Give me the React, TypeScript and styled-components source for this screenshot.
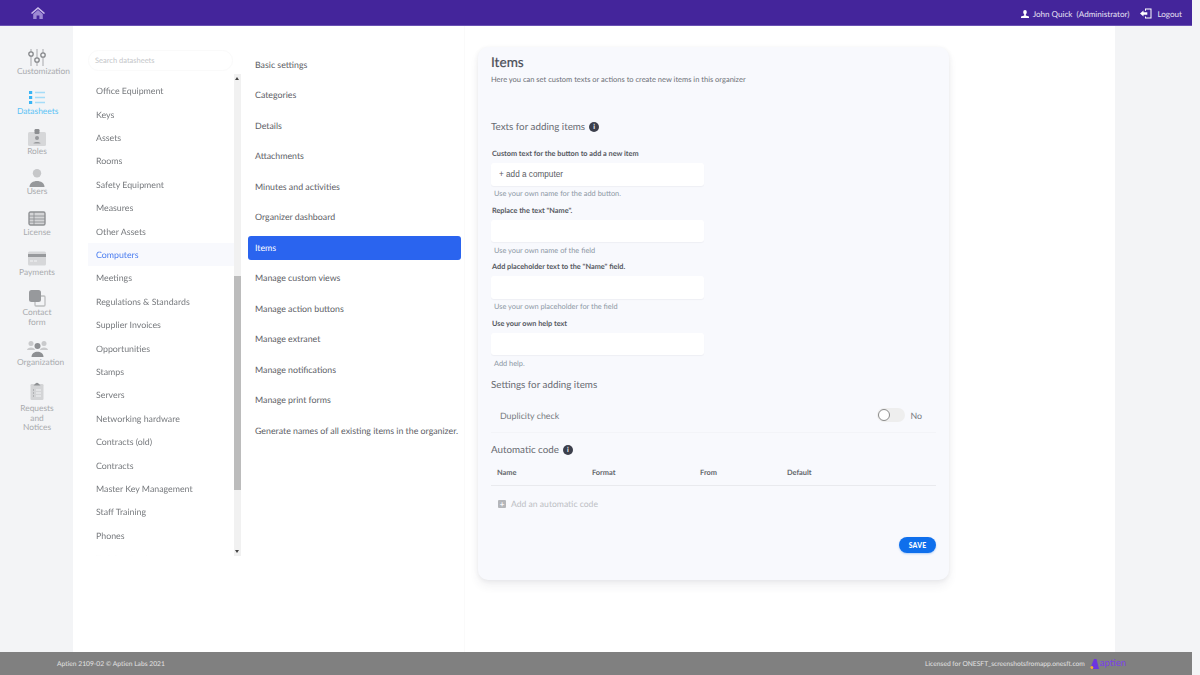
import styled, { createGlobalStyle } from "styled-components";

const GlobalStyle = createGlobalStyle`
	html, body {
		margin: 0;
		padding: 0;
		width: 1200px;
		height: 675px;
		overflow: hidden;
		background: #f3f4f6;
		font-family: "Lato", "Liberation Sans", sans-serif;
		text-rendering: geometricPrecision;
	}
	* {
		box-sizing: border-box;
	}
`;

const Page = styled.div`
	display: flex;
	flex-direction: column;
	width: 1200px;
	height: 675px;
`;

const Header = styled.header`
	display: flex;
	align-items: center;
	justify-content: space-between;
	width: 1192px;
	height: 26px;
	padding: 0 10px 0 31px;
	background: #44259b;
	border-bottom: 1px solid #6a52b3;
	color: #e6e1f3;
	font-size: 8.1px;
`;

const UserArea = styled.div`
	display: flex;
	align-items: center;
	margin-top: 2px;
`;

const UserName = styled.span`
	margin: 0 11px 0 4px;
	white-space: pre;
`;

const LogoutText = styled.span`
	margin-left: 5px;
`;

const Main = styled.div`
	display: flex;
	flex: 1;
	min-height: 0;
`;

const Sidebar = styled.nav`
	display: flex;
	flex-direction: column;
	width: 73px;
	padding: 23.3px 0 0 17px;
	background: #f3f4f6;
`;

const SideItem = styled.div<{ $gap: number; $active?: boolean }>`
	display: flex;
	flex-direction: column;
	width: 40px;
	margin-bottom: ${(p) => p.$gap}px;
	color: ${(p) => (p.$active ? "#5cc3f5" : "#a9abae")};
	font-size: 8.4px;
	line-height: 9.4px;
	text-align: center;
`;

const SideIconBox = styled.div<{ $labelGap?: number }>`
	display: flex;
	align-items: center;
	justify-content: center;
	height: 17px;
	margin-bottom: ${(p) => p.$labelGap ?? 1}px;
`;

const Content = styled.div`
	display: flex;
	width: 1042px;
	background: #ffffff;
	padding-left: 15px;
`;

const ListColumn = styled.div`
	display: flex;
	flex-direction: column;
	width: 160px;
	padding-top: 24px;
`;

const SearchBox = styled.div`
	width: 145px;
	height: 21px;
	padding-left: 6px;
	border: 1px solid #fafafa;
	border-radius: 11px;
	color: #c4c6c9;
	font-size: 7.5px;
	line-height: 19px;
`;

const ListRow = styled.div`
	display: flex;
	height: 482px;
	margin-top: 3px;
`;

const ListScroller = styled.div`
	width: 145.5px;
	height: 100%;
	padding-top: 5.3px;
	overflow: hidden;
	mask-image: linear-gradient(to bottom, #000 98%, transparent);
`;

const ListItem = styled.div<{ $active?: boolean }>`
	height: 23.4px;
	padding-left: 8px;
	background: ${(p) => (p.$active ? "#f8f9fd" : "transparent")};
	color: ${(p) => (p.$active ? "#4a7df0" : "#777a7e")};
	font-size: 8.8px;
	line-height: 23.4px;
	white-space: nowrap;
`;

const ScrollTrack = styled.div`
	display: flex;
	flex-direction: column;
	justify-content: space-between;
	align-items: center;
	position: relative;
	width: 7px;
	height: 100%;
	background: #f1f1f1;
`;

const ScrollThumb = styled.div`
	position: absolute;
	top: 202px;
	left: 0;
	width: 100%;
	height: 214px;
	background: #bcbcbc;
`;

const ScrollArrow = styled.div<{ $down?: boolean }>`
	width: 0;
	height: 0;
	margin: 3px 0;
	border-left: 2px solid transparent;
	border-right: 2px solid transparent;
	${(p) => (p.$down ? "border-top: 3px solid #444;" : "border-bottom: 3px solid #444;")}
`;

const SettingsNav = styled.div`
	display: flex;
	flex-direction: column;
	width: 217px;
	padding: 26.5px 3px 0 0;
	border-right: 1px solid #fafafa;
`;

const SettingsLink = styled.div<{ $active?: boolean }>`
	height: 24px;
	margin-bottom: 6.5px;
	padding-left: 7px;
	border-radius: 3px;
	background: ${(p) => (p.$active ? "#2a64ef" : "transparent")};
	color: ${(p) => (p.$active ? "#ffffff" : "#5d6066")};
	font-size: 8.8px;
	line-height: 24px;
	white-space: nowrap;
`;

const CardArea = styled.div`
	padding: 21px 0 0 13px;
`;

const Card = styled.section`
	display: flex;
	flex-direction: column;
	width: 471px;
	height: 533px;
	padding: 7px 13px 0;
	border-radius: 10px;
	background: #f8f9fd;
	box-shadow: 0 6px 10px rgba(60, 60, 80, 0.07), 0 1px 4px rgba(60, 60, 80, 0.08);
`;

const Title = styled.h1`
	margin: 0;
	color: #4b4e58;
	font-size: 13.6px;
	font-weight: 400;
	line-height: 16px;
	-webkit-text-stroke: 0.2px #4b4e58;
`;

const Subtitle = styled.p`
	margin: 5px 0 0;
	color: #6c6f76;
	font-size: 7.5px;
	line-height: 9px;
`;

const SectionTitle = styled.h2<{ $top: number }>`
	display: flex;
	align-items: center;
	gap: 4px;
	margin: ${(p) => p.$top}px 0 0;
	color: #686b72;
	font-size: 9.8px;
	font-weight: 400;
	line-height: 12px;
`;

const InfoBadge = styled.span`
	display: inline-flex;
	align-items: center;
	justify-content: center;
	width: 10px;
	height: 10px;
	border-radius: 50%;
	background: #3c3f4c;
	color: #ffffff;
	font-size: 7px;
	font-weight: 700;
	line-height: 10px;
`;

const Field = styled.div<{ $top: number }>`
	margin-top: ${(p) => p.$top}px;
`;

const FieldLabel = styled.label`
	display: block;
	margin-left: 1px;
	color: #55585f;
	font-size: 7.3px;
	font-weight: 700;
	line-height: 9px;
`;

const FieldInput = styled.input`
	display: block;
	width: 213px;
	height: 22.5px;
	margin-top: 5px;
	padding: 0 8px;
	border: none;
	border-radius: 3px;
	outline: none;
	background: #ffffff;
	box-shadow: 0 1px 1px rgba(60, 60, 80, 0.05);
	color: #5a5d63;
	font-family: "Liberation Sans", sans-serif;
	font-size: 8.2px;
`;

const FieldHelp = styled.div`
	margin: 3.5px 0 0 3px;
	color: #8c98a4;
	font-size: 7.4px;
	line-height: 9px;
`;

const SwitchRow = styled.div`
	display: flex;
	align-items: center;
	justify-content: space-between;
	height: 34px;
	margin-top: 8px;
	padding: 0 14px 0 9px;
	border-bottom: 1px solid #f3f4f8;
	color: #777a80;
	font-size: 8.8px;
`;

const SwitchWrap = styled.div`
	display: flex;
	align-items: center;
	gap: 5px;
`;

const SwitchTrack = styled.div`
	position: relative;
	width: 28px;
	height: 14px;
	border-radius: 7px;
	background: #eeeeee;
`;

const SwitchKnob = styled.div`
	position: absolute;
	top: 1px;
	left: 1px;
	width: 12px;
	height: 12px;
	border: 1px solid #8a8a8a;
	border-radius: 50%;
	background: #ffffff;
`;

const TableHead = styled.div`
	display: grid;
	grid-template-columns: 95px 108px 87px 1fr;
	height: 24px;
	margin-top: 6px;
	padding: 0 0 0 6px;
	border-bottom: 1px solid #e9eaee;
	color: #63666c;
	font-size: 7.4px;
	font-weight: 700;
	line-height: 22px;
`;

const AddRow = styled.div`
	display: flex;
	align-items: center;
	gap: 5px;
	height: 12px;
	margin: 12px 0 0 7px;
	color: #bdbfc4;
	font-size: 8.6px;
`;

const AddIcon = styled.span`
	width: 8px;
	height: 8px;
	border-radius: 1px;
	background: #b4b6ba;
	color: #f8f9fd;
	font-size: 8px;
	font-weight: 700;
	line-height: 8px;
	text-align: center;
`;

const SaveRow = styled.div`
	display: flex;
	justify-content: flex-end;
	margin-top: 27px;
`;

const SaveButton = styled.button`
	width: 37px;
	height: 16px;
	padding: 0;
	border: none;
	border-radius: 8px;
	background: #0f6fec;
	box-shadow: 0 1px 2px rgba(15, 111, 236, 0.3);
	color: #ffffff;
	font-family: inherit;
	font-size: 6.8px;
	font-weight: 900;
	letter-spacing: 0.2px;
`;

const Gutter = styled.div`
	width: 85px;
	background: #f3f4f6;
`;

const Footer = styled.footer`
	display: flex;
	align-items: center;
	justify-content: space-between;
	width: 1192px;
	height: 23px;
	padding: 0 66px 0 57px;
	background: #808080;
	color: #e2e2e2;
	font-size: 6.7px;
`;

const FooterRight = styled.div`
	display: flex;
	align-items: center;
	gap: 5px;
`;

const BrandWrap = styled.span`
	display: flex;
	align-items: center;
	gap: 1px;
	color: #7a3ee8;
	font-size: 9.5px;
	line-height: 10px;
`;

const CustomizationIcon = () => (
	<svg width="18" height="17" viewBox="0 0 18 17" fill="none">
		<path d="M3 0v17M9 0v17M15 0v17" strokeWidth="1.6" stroke="#c4c5c8" />
		<circle cx="3" cy="5" r="2.2" fill="#f3f4f6" strokeWidth="1.3" stroke="#85878a" />
		<circle cx="9" cy="11" r="2.2" fill="#f3f4f6" strokeWidth="1.3" stroke="#85878a" />
		<circle cx="15" cy="6" r="2.2" fill="#f3f4f6" strokeWidth="1.3" stroke="#85878a" />
	</svg>
);

const DatasheetsIcon = () => (
	<svg width="18" height="15" viewBox="0 0 18 15">
		<rect x="1" y="1" width="3.2" height="3" fill="#39b5f5" />
		<rect x="1" y="6" width="3.2" height="3" fill="#39b5f5" />
		<rect x="1" y="11" width="3.2" height="3" fill="#39b5f5" />
		<path d="M7 2.5h10M7 7.5h10M7 12.5h10" stroke="#a5dcf8" strokeWidth="1.4" />
	</svg>
);

const RolesIcon = () => (
	<svg width="20" height="17" viewBox="0 0 20 17">
		<rect x="1" y="3" width="18" height="14" rx="1.5" fill="#d6d7d9" />
		<rect x="7.5" y="0" width="5" height="5" rx="1.2" fill="#8c8e91" />
		<circle cx="10" cy="9" r="2" fill="#97999c" />
		<path d="M6.5 14.5c0-2 7-2 7 0z" fill="#97999c" />
	</svg>
);

const UsersIcon = () => (
	<svg width="16" height="18" viewBox="0 0 16 18">
		<circle cx="8" cy="4.2" r="4.2" fill="#c6c7c9" />
		<path d="M.5 18c0-8 15-8 15 0z" fill="#96989b" />
	</svg>
);

const LicenseIcon = () => (
	<svg width="18" height="15" viewBox="0 0 18 15" fill="none">
		<rect x="1" y="1" width="16" height="13" rx="1.5" fill="#d4d5d7" stroke="#8f9194" strokeWidth="1.4" />
		<path d="M1 5h16M1 8h16M1 11h16M6 1v13" stroke="#8f9194" strokeWidth="0.9" />
	</svg>
);

const PaymentsIcon = () => (
	<svg width="20" height="15" viewBox="0 0 20 15">
		<rect x="1" y="0.5" width="18" height="14" rx="1.5" fill="#d6d7d9" />
		<rect x="1" y="3" width="18" height="3" fill="#97999c" />
		<path d="M3 10h3M7 10h3" stroke="#f3f4f6" strokeWidth="1" />
	</svg>
);

const ContactIcon = () => (
	<svg width="18" height="17" viewBox="0 0 18 17">
		<rect x="7" y="6" width="10" height="10" rx="1" fill="#f3f4f6" stroke="#bcbdbf" strokeWidth="1.3" />
		<rect x="1" y="0" width="12" height="12" rx="2.5" fill="#97999c" />
	</svg>
);

const OrganizationIcon = () => (
	<svg width="21" height="17" viewBox="0 0 21 17">
		<circle cx="4" cy="3.5" r="2.5" fill="#c9cacc" />
		<circle cx="17" cy="3.5" r="2.5" fill="#c9cacc" />
		<path d="M0 10c0-3.5 8-3.5 8 0zM13 10c0-3.5 8-3.5 8 0z" fill="#c9cacc" />
		<circle cx="10.5" cy="6" r="3" fill="#8e9093" />
		<path d="M4.5 17c0-7 12-7 12 0z" fill="#8e9093" />
	</svg>
);

const RequestsIcon = () => (
	<svg width="14" height="18" viewBox="0 0 14 18">
		<rect x="0.5" y="2" width="13" height="16" rx="1.2" fill="#d3d4d6" />
		<path d="M3.5 3.5 5.5 1.5a2 2 0 0 1 3 0l2 2z" fill="#8f9194" />
		<path d="M3 8h1M3 11h1M3 14h1" stroke="#8f9194" />
		<path d="M6 8h5M6 11h5M6 14h5" stroke="#f3f4f6" />
	</svg>
);

const HomeIcon = () => (
	<svg width="14" height="12" viewBox="0 0 14 12">
		<path d="M7 0 0 6l1 1 6-5 6 5 1-1z" fill="#cbbdea" />
		<path d="M2.2 7 7 3l4.8 4v5H8.4V8.6H5.6V12H2.2z" fill="#9d89d3" />
	</svg>
);

const PersonIcon = () => (
	<svg width="8" height="8" viewBox="0 0 8 8">
		<path d="M2.2 2a1.8 2 0 0 1 3.6 0c0 1-.6 2-1 2.6v.8L8 6.6V8H0V6.6l3.2-1.2v-.8C2.8 4 2.2 3 2.2 2z" fill="#ffffff" />
	</svg>
);

const LogoutIcon = () => (
	<svg width="12" height="11" viewBox="0 0 12 11">
		<path d="M5 .5h6.500v10H5V8.600h1v1h4.500V1.500H6v1.300H5z" fill="#ffffff" />
		<path d="M0 5.500 3.500 2.600v1.700h3.800v2.400H3.500v1.700z" fill="#ffffff" />
	</svg>
);

const BrandMark = () => (
	<svg width="9" height="10" viewBox="0 0 9 10">
		<path d="M4 0h2.500L9 10H0z" fill="#6d35e0" />
		<circle cx="1.800" cy="8.500" r="1.500" fill="#f0b429" />
	</svg>
);

const sideItems = [
	{ label: "Customization", icon: <CustomizationIcon />, gap: 12.6 },
	{ label: "Datasheets", icon: <DatasheetsIcon />, gap: 12.6, active: true },
	{ label: "Roles", icon: <RolesIcon />, gap: 12.6 },
	{ label: "Users", icon: <UsersIcon />, gap: 13.6 },
	{ label: "License", icon: <LicenseIcon />, gap: 12.6 },
	{ label: "Payments", icon: <PaymentsIcon />, gap: 12.6 },
	{ label: "Contact form", icon: <ContactIcon />, gap: 13.2 },
	{ label: "Organization", icon: <OrganizationIcon />, gap: 14.6 },
	{ label: "Requests and Notices", icon: <RequestsIcon />, gap: 0, labelGap: 5 },
];

const datasheets = [
	"Office Equipment",
	"Keys",
	"Assets",
	"Rooms",
	"Safety Equipment",
	"Measures",
	"Other Assets",
	"Computers",
	"Meetings",
	"Regulations & Standards",
	"Supplier Invoices",
	"Opportunities",
	"Stamps",
	"Servers",
	"Networking hardware",
	"Contracts (old)",
	"Contracts",
	"Master Key Management",
	"Staff Training",
	"Phones",
	"Training Sessions",
];

const settings = [
	"Basic settings",
	"Categories",
	"Details",
	"Attachments",
	"Minutes and activities",
	"Organizer dashboard",
	"Items",
	"Manage custom views",
	"Manage action buttons",
	"Manage extranet",
	"Manage notifications",
	"Manage print forms",
	"Generate names of all existing items in the organizer.",
];

const fields = [
	{ label: "Custom text for the button to add a new item", value: "+ add a computer", help: "Use your own name for the add button.", top: 16 },
	{ label: 'Replace the text "Name".', value: "", help: "Use your own name of the field", top: 7.5 },
	{ label: 'Add placeholder text to the "Name" field.', value: "", help: "Use your own placeholder for the field", top: 7.5 },
	{ label: "Use your own help text", value: "", help: "Add help.", top: 7.5 },
];

const App = () => {
	return (
		<Page>
			<GlobalStyle />
			<Header>
				<HomeIcon />
				<UserArea>
					<PersonIcon />
					<UserName>John Quick  (Administrator)</UserName>
					<LogoutIcon />
					<LogoutText>Logout</LogoutText>
				</UserArea>
			</Header>
			<Main>
				<Sidebar>
					{sideItems.map((item) => (
						<SideItem key={item.label} $gap={item.gap} $active={item.active}>
							<SideIconBox $labelGap={item.labelGap}>{item.icon}</SideIconBox>
							{item.label}
						</SideItem>
					))}
				</Sidebar>
				<Content>
					<ListColumn>
						<SearchBox>Search datasheets</SearchBox>
						<ListRow>
							<ListScroller>
								{datasheets.map((name) => (
									<ListItem key={name} $active={name === "Computers"}>
										{name}
									</ListItem>
								))}
							</ListScroller>
							<ScrollTrack>
								<ScrollArrow />
								<ScrollThumb />
								<ScrollArrow $down />
							</ScrollTrack>
						</ListRow>
					</ListColumn>
					<SettingsNav>
						{settings.map((name) => (
							<SettingsLink key={name} $active={name === "Items"}>
								{name}
							</SettingsLink>
						))}
					</SettingsNav>
					<CardArea>
						<Card>
							<Title>Items</Title>
							<Subtitle>Here you can set custom texts or actions to create new items in this organizer</Subtitle>
							<SectionTitle $top={37}>
								Texts for adding items <InfoBadge>i</InfoBadge>
							</SectionTitle>
							{fields.map((field) => (
								<Field key={field.label} $top={field.top}>
									<FieldLabel>{field.label}</FieldLabel>
									<FieldInput defaultValue={field.value} />
									<FieldHelp>{field.help}</FieldHelp>
								</Field>
							))}
							<SectionTitle $top={11}>Settings for adding items</SectionTitle>
							<SwitchRow>
								Duplicity check
								<SwitchWrap>
									<SwitchTrack>
										<SwitchKnob />
									</SwitchTrack>
									No
								</SwitchWrap>
							</SwitchRow>
							<SectionTitle $top={11}>
								Automatic code <InfoBadge>i</InfoBadge>
							</SectionTitle>
							<TableHead>
								<span>Name</span>
								<span>Format</span>
								<span>From</span>
								<span>Default</span>
							</TableHead>
							<AddRow>
								<AddIcon>+</AddIcon>
								Add an automatic code
							</AddRow>
							<SaveRow>
								<SaveButton>SAVE</SaveButton>
							</SaveRow>
						</Card>
					</CardArea>
				</Content>
				<Gutter />
			</Main>
			<Footer>
				<span>Aptien 2109-02 © Aptien Labs 2021</span>
				<FooterRight>
					Licensed for ONESFT_screenshotsfromapp.onesft.com
					<BrandWrap>
						<BrandMark />
						aptien
					</BrandWrap>
				</FooterRight>
			</Footer>
		</Page>
	);
};

export default App;
